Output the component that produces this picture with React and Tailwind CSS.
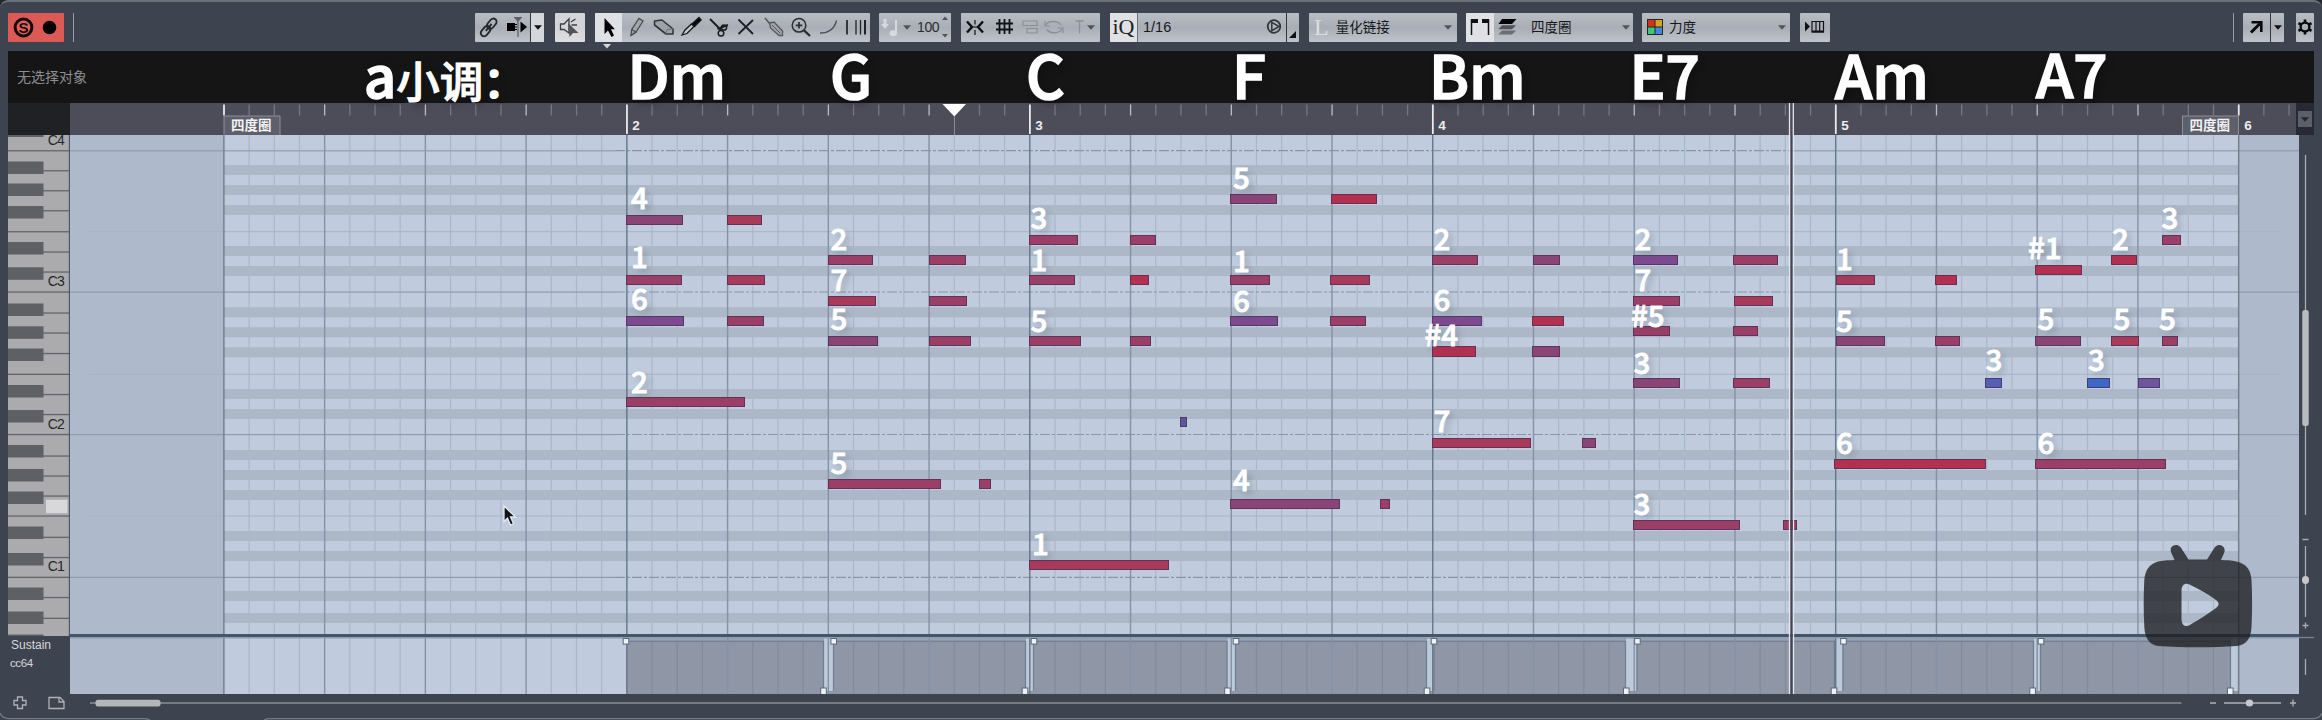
import React from "react";

const BAR = 402.95;
const START = 223.9;
const END = 2238.6;
const X0 = 70;
const Y0 = 135;

const COLORS = {
  r: "#b43050",
  c: "#a83a5a",
  m: "#9c3f66",
  p: "#8a4576",
  v: "#7c4a8e",
  i: "#5c55a0",
  u: "#6c579e",
  s: "#5560b4",
  b: "#3d69c6",
};

// [x start, x end, y top, height, colour]
const NOTES = [
  [626, 683, 215, 10, "p"], [727, 762, 215, 10, "c"],
  [626, 682, 275, 10, "m"], [727, 765, 275, 10, "c"],
  [626, 684, 316, 10, "v"], [727, 764, 316, 10, "m"],
  [626, 745, 397, 10, "m"],
  [828, 873, 255, 10, "m"], [929, 966, 255, 10, "m"],
  [828, 876, 296, 10, "c"], [929, 967, 296, 10, "m"],
  [828, 878, 336, 10, "p"], [929, 971, 336, 10, "m"],
  [828, 941, 479, 10, "m"], [979, 991, 479, 10, "m"],
  [1029, 1078, 235, 10, "m"], [1130, 1156, 235, 10, "m"],
  [1029, 1075, 275, 10, "m"], [1130, 1149, 275, 10, "r"],
  [1029, 1081, 336, 10, "m"], [1130, 1151, 336, 10, "m"],
  [1180, 1187, 417, 10, "i"],
  [1029, 1169, 560, 10, "c"],
  [1230, 1277, 194, 10, "p"], [1331, 1377, 194, 10, "r"],
  [1230, 1270, 275, 10, "m"], [1330, 1370, 275, 10, "c"],
  [1230, 1278, 316, 10, "v"], [1330, 1366, 316, 10, "m"],
  [1230, 1340, 499, 10, "p"], [1380, 1390, 499, 10, "m"],
  [1432, 1478, 255, 10, "m"], [1533, 1560, 255, 10, "p"],
  [1432, 1482, 316, 10, "v"], [1532, 1564, 316, 10, "r"],
  [1432, 1476, 346, 11, "r"], [1532, 1560, 346, 11, "p"],
  [1432, 1531, 438, 10, "c"], [1582, 1596, 438, 10, "p"],
  [1633, 1678, 255, 10, "v"], [1733, 1778, 255, 10, "m"],
  [1633, 1680, 296, 10, "m"], [1734, 1773, 296, 10, "c"],
  [1633, 1670, 326, 10, "m"], [1733, 1758, 326, 10, "m"],
  [1633, 1680, 378, 10, "p"], [1733, 1770, 378, 10, "m"],
  [1633, 1740, 520, 10, "m"], [1783, 1797, 520, 10, "m"],
  [1836, 1875, 275, 10, "c"], [1935, 1957, 275, 10, "r"],
  [1836, 1885, 336, 10, "p"], [1935, 1960, 336, 10, "m"],
  [1985, 2002, 378, 10, "s"],
  [1834, 1986, 459, 10, "r"],
  [2035, 2082, 265, 10, "r"], [2111, 2137, 255, 10, "r"], [2162, 2181, 235, 10, "m"],
  [2035, 2081, 336, 10, "p"], [2111, 2139, 336, 10, "c"], [2162, 2178, 336, 10, "m"],
  [2087, 2110, 378, 10, "b"], [2138, 2160, 378, 10, "u"],
  [2035, 2166, 459, 10, "m"],
];

// [text, x, baseline]
const LABELS = [
  ["4", 631, 209], ["1", 631, 267.5], ["6", 631, 310], ["2", 631, 392.5],
  ["2", 830.5, 250], ["7", 830.5, 291], ["5", 830.5, 329.5], ["5", 830.5, 474],
  ["3", 1030.5, 228.5], ["1", 1030.5, 271], ["5", 1030.5, 332], ["1", 1032, 555],
  ["5", 1233, 188.5], ["1", 1233, 271.5], ["6", 1233, 312], ["4", 1233, 491],
  ["2", 1433.5, 250], ["6", 1433.5, 311], ["#4", 1424.5, 346], ["7", 1433.5, 432],
  ["2", 1634.5, 250], ["7", 1634.5, 291], ["#5", 1631, 327], ["3", 1633.5, 374], ["3", 1633.5, 515],
  ["1", 1836, 270], ["5", 1836, 332], ["3", 1985.5, 370.5], ["6", 1836, 454],
  ["#1", 2028, 259], ["2", 2112, 250], ["3", 2161.5, 228.5],
  ["5", 2037.5, 330], ["5", 2113.5, 330], ["5", 2159, 330],
  ["3", 2088, 370.5], ["6", 2037.5, 454],
];

const CHORDS = [
  ["Dm", 627.5, 99], ["G", 830, 99], ["C", 1026, 99], ["F", 1232, 99],
  ["Bm", 1429, 99], ["E7", 1629.5, 99], ["Am", 1835, 99], ["A7", 2036, 97.5],
];

const SHARP_ROWS = [165, 185, 205, 246, 266, 307.3, 327.3, 347.3, 389, 409, 450, 470, 490, 531, 551, 591, 613];
const C_LINES = [150.7, 292, 434.5, 577.3];
const F_LINES = [231.7, 374.3, 516];

const SUSTAIN_GAPS = [
  [824, 833], [1026, 1033], [1227.5, 1235], [1427, 1433.5],
  [1626, 1636.5], [1835, 1842.5], [2034, 2040], [2231, 2238],
];
const TOP_HANDLES = [626, 833.7, 1034, 1236, 1434, 1637.4, 1843.5, 2041];
const LOW_HANDLES = [823.5, 1025, 1227.5, 1427, 1626.3, 1834, 2032.6, 2230.3];

const steps = Array.from({ length: 81 }, (_, k) => ({ k, x: START + (k * BAR) / 16 }));

function Box({ className = "", children }) {
  return (
    <div className={`flex h-[29px] shrink-0 items-center overflow-hidden rounded-[1px] bg-linear-to-b from-[#b9bdc4] via-[#a9aeb6] via-50% to-[#bfc3c9] text-[#15171a] ${className}`}>
      {children}
    </div>
  );
}

function Icon({ w = 24, className = "", children }) {
  return (
    <svg
      className={`shrink-0 ${className}`}
      width={w}
      height="24"
      viewBox={`0 0 ${w} 24`}
      fill="none"
      stroke="currentColor"
      strokeWidth="1.5"
    >
      {children}
    </svg>
  );
}

function Down({ className = "text-[#50545b]" }) {
  return (
    <svg className={`shrink-0 ${className}`} width="8" height="5" viewBox="0 0 8 5">
      <path d="M0 0.3H8L4 4.7Z" fill="currentColor" />
    </svg>
  );
}

const cjk = "font-['Noto_Sans_CJK_SC','Noto_Sans',sans-serif]";

function Toolbar() {
  return (
    <div className="flex h-[51px] shrink-0 items-start pt-[12.5px] pl-2">
      <div className="flex h-[29px] w-14 items-center rounded-[1px] bg-[#dc5a55]">
        <svg width="56" height="29" viewBox="0 0 56 29">
          <circle cx="15.5" cy="14.5" r="8.4" fill="#e0605a" stroke="#140a0c" strokeWidth="3" />
          <text x="15.5" y="20" textAnchor="middle" fontSize="15" fontWeight="700" fontFamily="Liberation Sans, sans-serif" fill="#140a0c">S</text>
          <circle cx="41.5" cy="14.5" r="6.8" fill="#060303" />
        </svg>
      </div>
      <div className="ml-[9px] h-[29px] w-px bg-[#9a9ea5]" />

      <Box className="ml-[401px] w-[69px]">
        <Icon w={28} className="text-[#25282d]">
          <g transform="rotate(-50 14 12)" strokeWidth="1.9">
            <rect x="3" y="8.7" width="11.5" height="6.6" rx="3.3" />
            <rect x="12.5" y="8.7" width="11.5" height="6.6" rx="3.3" />
            <path d="M9 12H18" />
          </g>
        </Icon>
        <Icon w={27} className="text-black">
          <path d="M4 8H12V16H4Z" fill="currentColor" stroke="none" />
          <path d="M17.5 6.5L24 12L17.5 17.5Z" fill="currentColor" stroke="none" />
          <path d="M12 9.5H14M12 12H14M12 14.5H14" strokeWidth="1" />
          <path d="M15 4V22" stroke="#6a6d73" />
          <path d="M10.5 2H19.5L15 7Z" fill="#5c5f65" stroke="none" />
        </Icon>
        <div className="flex h-full w-[14px] items-center justify-center border-l border-[#33363c] bg-[#d5d7db]">
          <Down className="text-[#111]" />
        </div>
      </Box>

      <Box className="ml-[11px] w-[30px] justify-center from-[#d3d5d8] via-[#d3d5d8] to-[#dcdee0]">
        <Icon w={26} className="text-[#3a3d42]">
          <path d="M3.5 9H7L12 3.8V18L7 14.5H3.5Z" strokeWidth="1.3" />
          <path d="M14.5 10H20M14 7L18.5 4" strokeWidth="1.3" />
          <path d="M11 8L21.5 18H16L12.5 22Z" fill="#505358" stroke="none" />
        </Icon>
      </Box>

      <div className="ml-2.5 flex flex-col">
        <Box className="w-[275px]">
          <div className="flex h-full w-[27px] shrink-0 items-center justify-center bg-[#dfe1e4]">
            <Icon w={24} className="text-black">
              <path d="M7.5 3V19L11 15.5L14.5 22L17 20.5L14 14.3H18Z" fill="currentColor" stroke="none" />
            </Icon>
          </div>
          <Icon w={27.5} className="text-[#4a4d52]">
            <path d="M9 20.5L9.7 14.5L17 3.5L21 6L14 17Z" fill="#a3a6ab" strokeWidth="1.3" />
            <path d="M9.7 14.5L14 17L9 20.5" strokeWidth="1.2" />
          </Icon>
          <Icon w={27.5} className="text-[#33363b]">
            <path d="M4.5 6L12 5L23 14V19H16L4.5 10Z" fill="#9ea2a8" strokeWidth="1.6" strokeLinejoin="round" />
            <path d="M16 19L17 14.5L23 14" stroke="#6f7379" strokeWidth="1" />
          </Icon>
          <Icon w={27.5} className="text-[#15171a]">
            <path d="M15 9L22 2.5L24 5L17.5 11.5Z" fill="#000" strokeWidth="1.5" />
            <path d="M5 20L8 15L14.5 9L17 11.5L10 18.5Z" fill="#c2c5ca" strokeWidth="1.3" />
          </Icon>
          <Icon w={27.5} className="text-[#1b1d21]">
            <path d="M5 4L16 15M23 10L12.5 14" strokeWidth="1.9" />
            <circle cx="19" cy="12.5" r="2.6" />
            <circle cx="16" cy="18.3" r="2.8" />
          </Icon>
          <Icon w={27.5} className="text-[#1e2024]">
            <path d="M6.5 4.5L21 19M21 5L6.5 19" strokeWidth="1.8" />
          </Icon>
          <Icon w={27.5} className="text-[#55585e]">
            <path d="M5 3L10 9" strokeWidth="1.5" />
            <path d="M9.5 8L14 7L22.5 16V20.5H19L10.5 13Z" fill="#9fa3a9" strokeWidth="1.3" />
            <path d="M12 10L20 18" strokeWidth="1" />
          </Icon>
          <Icon w={27.5} className="text-[#2a2d32]">
            <circle cx="12" cy="10.3" r="6.8" />
            <path d="M12 7V13.6M8.7 10.3H15.3" strokeWidth="1.7" />
            <path d="M17 15.3L23 21" strokeWidth="2.4" />
          </Icon>
          <Icon w={27.5} className="text-[#4f5258]">
            <path d="M5 18C13 18.5 19.5 14 21.5 5.5" strokeWidth="1.4" />
          </Icon>
          <Icon w={27.5} className="text-[#202227]">
            <path d="M5 5V19.5" strokeWidth="1.7" />
            <path d="M14 5V19.5M18.5 5V19.5" strokeWidth="1.3" />
            <path d="M23 5V19.5" strokeWidth="2" />
          </Icon>
        </Box>
        <svg className="mt-[2.5px] ml-2" width="8" height="5" viewBox="0 0 8 5">
          <path d="M0 0H8L4 4.5Z" fill="#d5d8dc" />
        </svg>
      </div>

      <Box className="ml-[9px] w-[72px]">
        <Icon w={21} className="text-[#d6d9dd]">
          <path d="M6 4V9" strokeWidth="3" />
          <path d="M2 9H10L6 14Z" fill="currentColor" stroke="none" />
          <path d="M17 5V18" strokeWidth="2" />
          <ellipse cx="14.3" cy="18.3" rx="3.7" ry="3" fill="currentColor" stroke="none" />
        </Icon>
        <div className="ml-[3px] flex"><Down /></div>
        <span className="ml-[6px] font-['Liberation_Sans',sans-serif] text-[14px] leading-none tracking-[-0.4px] text-[#2b2e33]">100</span>
        <svg className="ml-[2px] shrink-0" width="8" height="24" viewBox="0 0 8 24">
          <path d="M1 5L4 1.5L7 5ZM1 19H7L4 22.5Z" fill="#50545b" />
        </svg>
      </Box>

      <Box className="ml-[10px] w-[139px]">
        <Icon w={29} className="text-[#0d0f12]">
          <path d="M6 6.5L11 12L6 17.5M22 6.5L17 12L22 17.5" strokeWidth="2.4" />
          <path d="M14 5V9.5M14 15V20" strokeWidth="1.2" />
          <path d="M12 12H16" strokeWidth="1.2" />
        </Icon>
        <Icon w={29} className="text-[#101216]">
          <path d="M9.5 4V19M14.5 4V19M19.5 4V19M6 8.5H23M6 14.5H23" strokeWidth="1.8" />
        </Icon>
        <Icon w={20} className="ml-px text-[#8b9097]">
          <path d="M3 6H17V10.5H3ZM7 13.5H17V18H7Z" strokeWidth="1.2" />
        </Icon>
        <Icon w={27} className="text-[#8b9097]">
          <path d="M6 10C8 5.5 18 5 21 10M22 14C19 19 10 19 7 14.5" strokeWidth="1.4" />
          <path d="M5 6V11H10M23 18V13H18" strokeWidth="1.2" />
        </Icon>
        <Icon w={20} className="text-[#8b9097]">
          <path d="M8.5 6H16.5M12.5 6V18.5" strokeWidth="1.3" />
        </Icon>
        <Down />
      </Box>

      <Box className="ml-[10px] w-[189px]">
        <div className="flex h-full w-7 items-center justify-center border-r border-[#6d7178] bg-[#dfe1e4] font-['Liberation_Serif',serif] text-[22px] leading-none text-[#222]">iQ</div>
        <span className="ml-[5px] font-['Liberation_Sans',sans-serif] text-[14.5px] leading-none text-[#15171a]">1/16</span>
        <Icon w={20} className="ml-auto text-[#33363b]">
          <circle cx="10" cy="11.5" r="6.3" strokeWidth="1.8" />
          <path d="M7.8 7.3L15 11.5L7.8 15.7Z" fill="#b4b8be" strokeWidth="1.5" />
        </Icon>
        <div className="ml-[2px] flex h-full w-[13px] items-end justify-end border-l border-[#33363c] pr-[3px] pb-1">
          <svg width="7" height="7" viewBox="0 0 7 7"><path d="M7 0V7H0Z" fill="#111" /></svg>
        </div>
      </Box>

      <Box className="ml-[10px] w-[148px] pr-[5px]">
        <span className="ml-[5px] font-['Liberation_Serif',serif] text-[24px] leading-none text-[#dadde1]">L</span>
        <span className={`ml-[7px] text-[13.5px] leading-none text-[#15171a] ${cjk}`}>量化链接</span>
        <div className="ml-auto flex"><Down /></div>
      </Box>

      <Box className="ml-[9px] w-[167px] pr-[3px]">
        <div className="flex h-full w-7 shrink-0 items-center justify-center bg-[#dfe1e4]">
          <Icon w={22} className="text-[#111]">
            <path d="M2.5 4V20M19.5 4V20" strokeWidth="1.5" />
            <path d="M2 4H9V8H2ZM13 4H20V8H13Z" fill="currentColor" stroke="none" />
          </Icon>
        </div>
        <Icon w={26}>
          <path d="M8 4H22.5L18 9H4.5Z" fill="#050505" stroke="none" />
          <path d="M8 10.3H22L18 14.3H4.5Z" fill="#4f5359" stroke="none" />
          <path d="M8 15.5H22L18 19.5H4.5Z" fill="#6b6f75" stroke="none" />
        </Icon>
        <span className={`ml-[11px] text-[13.5px] leading-none text-[#15171a] ${cjk}`}>四度圈</span>
        <div className="ml-auto flex"><Down /></div>
      </Box>

      <Box className="ml-[9px] w-[148px] pr-1">
        <svg className="ml-[5px] shrink-0" width="16" height="16" viewBox="0 0 16 16">
          <rect width="16" height="16" fill="#2a2620" />
          <rect x="1" y="1" width="6.5" height="6.5" fill="#d8301c" />
          <rect x="8.5" y="1" width="6.5" height="6.5" fill="#d8a028" />
          <rect x="1" y="8.5" width="6.5" height="6.5" fill="#3cc870" />
          <rect x="8.5" y="8.5" width="6.5" height="6.5" fill="#3c88dc" />
        </svg>
        <span className={`ml-[6px] text-[13.5px] leading-none text-[#15171a] ${cjk}`}>力度</span>
        <div className="ml-auto flex"><Down /></div>
      </Box>

      <Box className="ml-[10px] w-[30px] justify-center">
        <Icon w={26} className="text-[#101215]">
          <path d="M3 6.5L8 11.5L3 16.5Z" fill="currentColor" stroke="none" />
          <path d="M10 6.5H21.5V17H10ZM14 6.5V17M17.7 6.5V17" strokeWidth="1.2" />
          <path d="M10 16.5H22" strokeWidth="2" />
        </Icon>
      </Box>

      <div className="ml-[403px] h-[29px] w-px bg-[#9a9ea5]" />
      <Box className="ml-[9px] w-[41px]">
        <Icon w={27} className="text-[#08090b]">
          <path d="M8 17.5L17 8.5" strokeWidth="3" />
          <path d="M8.5 7.3H18.3V17" strokeWidth="2.6" />
        </Icon>
        <div className="flex h-full w-[14px] items-center justify-center border-l border-[#33363c]">
          <Down className="text-[#111]" />
        </div>
      </Box>
      <Box className="ml-[12px] w-[18px] justify-center">
        <Icon w={18} className="text-[#08090b]">
          <circle cx="9" cy="12" r="4.4" strokeWidth="2.4" />
          <path d="M9 4.5V7.5M9 16.5V19.5M2.5 8.2L5 9.7M13 14.3L15.5 15.8M2.5 15.8L5 14.3M13 9.7L15.5 8.2" strokeWidth="2.6" />
        </Icon>
      </Box>
    </div>
  );
}

function InfoLine() {
  return (
    <div className="relative mx-2 flex h-[52px] shrink-0 items-center bg-[#151516] pb-[2px] pl-[9px]">
      <span className={`text-[14px] leading-none text-[#8d8e92] ${cjk}`}>无选择对象</span>
    </div>
  );
}

function Ruler() {
  return (
    <div className="flex h-8 shrink-0 px-2">
      <div className="w-[62px] bg-[#202124]" />
      <svg width="2226" height="32" viewBox="70 103 2226 32">
        <rect x="70" y="103" width="2226" height="32" fill="#4d4c59" />
        {Array.from({ length: 83 }, (_, k) => {
          const x = START + (k * BAR) / 16;
          const bar = k % 16 === 0;
          return (
            <rect
              key={k}
              x={x - (bar ? 0.8 : 0.6)}
              y="104.5"
              width={bar ? 1.8 : 1.3}
              height={bar && k > 0 && k < 80 ? 29.5 : 11}
              fill={bar ? "#e9e9ee" : k % 4 === 0 ? "#bcbcc6" : "#777683"}
            />
          );
        })}
        {[2, 3, 4, 5, 6].map((n) => (
          <text key={n} x={START + (n - 1) * BAR + 5.5} y="129.5" fontSize="13.5" fontWeight="700" fontFamily="Liberation Sans, sans-serif" fill="#ececf0">{n}</text>
        ))}
        {[[224, 56, 231], [2182.5, 56, 2189.5]].map(([x, w, tx]) => (
          <g key={x}>
            <rect x={x} y="116" width={w} height="19" fill="#5d5f6b" />
            <path d={`M${x} 135V116H${x + w}V135`} fill="none" stroke="#8d8f99" />
            <text x={tx} y="130.3" fontSize="13.5" fontWeight="700" fontFamily="Noto Sans CJK SC, sans-serif" fill="#f2f2f4">四度圈</text>
          </g>
        ))}
        <path d="M942.5 104H966L954.3 116.5Z" fill="#fff" />
        <path d="M954.5 116V135" stroke="#8a8994" />
        <path d="M1789.5 103V135M1793.3 103V135" stroke="#e4e4ea" strokeWidth="1.3" />
      </svg>
      <div className="flex w-[18px] items-center justify-center bg-[#272a35]">
        <div className="flex h-4 w-[14px] items-center justify-center bg-[#5c5f69]">
          <Down className="text-[#23262f]" />
        </div>
      </div>
    </div>
  );
}

function Keyboard() {
  const blackKeys = [161.5, 183.5, 206, 242, 267.3, 303.5, 326.3, 348.5, 385, 410, 445, 469, 491.5, 526.5, 553, 587.5, 611.5];
  const splits = [170.7, 190.7, 210.7, 252, 272, 313, 333, 353.5, 394.5, 414.5, 456, 476, 496, 537.3, 557.5, 597.5, 618.3];
  return (
    <svg className="shrink-0" width="62" height="501" viewBox="8 135 62 501">
      <rect x="8" y="135" width="62" height="501" fill="#ababae" />
      <rect x="8" y="135" width="35.5" height="2" fill="#5f6063" />
      {splits.map((y) => (
        <rect key={y} x="43" y={y - 0.6} width="26" height="1.3" fill="#64656b" />
      ))}
      {C_LINES.concat(F_LINES).map((y) => (
        <rect key={y} x="8" y={y - 0.6} width="61" height="1.3" fill="#64656b" />
      ))}
      {blackKeys.map((y) => (
        <rect key={y} x="8" y={y} width="35.5" height="12.5" fill="#5f6063" />
      ))}
      <rect x="8" y="634.5" width="35.5" height="2" fill="#5f6063" />
      <rect x="46" y="499.7" width="21.5" height="13.5" fill="#d8d8da" />
      {[["C4", 144.7], ["C3", 286], ["C2", 428.5], ["C1", 571]].map(([t, y]) => (
        <text key={t} x="47.8" y={y} fontSize="14" textLength="17" fontFamily="Liberation Sans, sans-serif" fill="#25262a">{t}</text>
      ))}
      <rect x="68.8" y="135" width="1.2" height="501" fill="#4f566e" />
    </svg>
  );
}

function Grid() {
  return (
    <svg className="block" width="2229" height="559" viewBox="70 135 2229 559">
      <rect x="70" y="135" width="2229" height="559" fill="#aeb9cc" />
      <rect x={START} y="135" width={END - START} height="559" fill="#c0ccdd" />
      {steps.map(({ k, x }) => k % 4 !== 0 && (
        <rect key={k} x={x - 0.6} y="135" width="1.2" height="559" fill="#a9b7ca" />
      ))}
      {SHARP_ROWS.map((y) => (
        <rect key={y} x={START} y={y} width={END - START} height="10" fill="#acb8c7" />
      ))}
      {F_LINES.map((y) => (
        <rect key={y} x="90" y={y - 0.5} width="2190" height="1" fill="#a7b3c5" />
      ))}
      {C_LINES.map((y) => (
        <g key={y}>
          <rect x="70" y={y - 0.5} width="545" height="1.2" fill="#8f9bb0" />
          <path d={`M615 ${y}H1790`} stroke="#8996aa" strokeWidth="1.2" strokeDasharray="10 2 3 2" />
          <rect x="1790" y={y - 0.5} width="509" height="1.2" fill="#8f9bb0" />
        </g>
      ))}

      <rect x="626.5" y="638" width={END - 626.5} height="56" fill="#8f97a6" />
      <rect x="626.5" y="638" width={END - 626.5} height="3" fill="#95a3b4" />
      <rect x="626.5" y="640.7" width={END - 626.5} height="1.2" fill="#6f7e90" />
      {steps.map(({ k, x }) => k > 16 && k % 4 !== 0 && (
        <rect key={k} x={x - 0.6} y="642" width="1.2" height="52" fill="#808b9b" />
      ))}
      {SUSTAIN_GAPS.map(([a, b]) => (
        <g key={a}>
          <rect x={a} y="638" width={b - a} height="53" fill="#bccad9" />
          <path d={`M${a - 0.5} 641V691M${b + 0.5} 641V691`} stroke="#6e7e90" strokeWidth="1.2" />
        </g>
      ))}
      {steps.map(({ k, x }) => k % 4 === 0 && (
        <rect
          key={k}
          x={x - 0.7}
          y="135"
          width="1.4"
          height="559"
          fill={k === 0 || k === 80 ? "#737b87" : k % 16 === 0 ? "#65758a" : "#8592a6"}
        />
      ))}

      <rect x="70" y="634" width="2229" height="3.2" fill="#45566a" />
      <rect x="70" y="637.2" width="2229" height="1.3" fill="#8d9cad" />
      {TOP_HANDLES.map((x) => (
        <rect key={x} x={x - 2.8} y="638.5" width="5.6" height="5.6" fill="#eef1f5" stroke="#5b6878" />
      ))}
      {LOW_HANDLES.map((x) => (
        <rect key={x} x={x - 2.8} y="688" width="5.6" height="6.5" fill="#eef1f5" stroke="#5b6878" />
      ))}
    </svg>
  );
}

function PianoRoll() {
  return (
    <div className="relative h-[559px] w-[2229px] shrink-0">
      <Grid />
      {NOTES.map(([a, b, y, h, c]) => (
        <div
          key={`${a}-${y}`}
          className="absolute border border-[#4b2f58]/75"
          style={{ left: a - X0, top: y - Y0, width: b - a, height: h, backgroundColor: COLORS[c] }}
        />
      ))}
      {LABELS.map(([t, x, y]) => (
        <span
          key={`${t}-${x}-${y}`}
          className={`absolute h-6 text-[29.5px] leading-6 font-medium whitespace-nowrap text-white [-webkit-text-stroke:0.8px_white] [text-shadow:4px_4px_6px_rgba(70,85,110,0.35)] ${cjk}`}
          style={{ left: x - X0, top: y - Y0 - 25 }}
        >
          {t}
        </span>
      ))}
      <svg className="absolute top-0 left-[1717px]" width="10" height="559" viewBox="0 0 10 559">
        <path d="M2.5 0V559M6.5 0V559" stroke="#dfe6ee" strokeWidth="1.3" />
        <path d="M4.5 0V559" stroke="#4b4454" strokeWidth="2.2" />
      </svg>
      <svg className="absolute top-[369px] left-[432px]" width="18" height="26" viewBox="0 0 18 26">
        <path d="M2 2V17.5L5.5 14.2L8.5 21L11.5 19.7L8.5 13H13.5Z" fill="#111317" stroke="#e6eaf0" strokeWidth="1.3" />
      </svg>
      <svg className="absolute top-[407px] left-[2070px]" width="116" height="110" viewBox="2140 542 116 110">
        <path
          fillRule="evenodd"
          fill="#1c1d20"
          fillOpacity="0.78"
          d="M2158 561.5C2165 560.3 2170 560.2 2174.5 560L2171 552C2169 546 2176 542.5 2180.5 547L2188.5 559.6H2207L2215 547C2219 542.5 2226 546 2224.5 552L2221 560C2226 560.2 2231 560.3 2237 561.5C2247 564 2251 571 2251.5 580C2252.3 595 2252.3 612 2251.5 627C2251 638 2247 644.5 2237 646C2212 647.8 2183 647.8 2158 646C2149 644.5 2145 638 2144.3 627C2143.5 612 2143.5 595 2144.3 580C2145 571 2149 564 2158 561.5ZM2181.5 590V620C2182 626 2186 627.5 2190.5 624.5C2200 619.5 2208 613.5 2216 608C2219.5 605 2219.5 603 2216 600C2208 594 2200 589.5 2190.5 585C2186 582.5 2182 584 2181.5 590Z"
        />
      </svg>
    </div>
  );
}

function VerticalScroll() {
  return (
    <svg className="shrink-0" width="15" height="559" viewBox="2299 135 15 559">
      <g stroke="#a9acb3" strokeWidth="1.3" fill="none">
        <path d="M2305.5 155V515M2305.5 546V617M2305.5 659V675" />
        <path d="M2302.5 539.5H2308.5M2302.5 625.5H2308.5M2305.5 622.5V628.5" />
        <path d="M2299 637.5H2314" stroke="#7f858f" />
      </g>
      <rect x="2302.3" y="310" width="6.4" height="116" rx="2.5" fill="#b9bbc0" />
      <ellipse cx="2305.5" cy="580" rx="3.5" ry="4" fill="#c6c8cc" />
    </svg>
  );
}

function Footer() {
  return (
    <svg className="shrink-0" width="2322" height="26" viewBox="0 694 2322 26">
      <g fill="none" stroke="#aeb1b6" strokeWidth="1.3">
        <path d="M17.5 697V700.5H14V705H17.5V708.5H22.5V705H26V700.5H22.5V697Z" />
        <path d="M49 697.5H60L64 701.5V708.5H49ZM59 697.5V702H64" />
        <path d="M90 703H2181.5" stroke="#8b8e93" strokeWidth="1.6" />
        <path d="M2210 703H2216M2224 703H2281M2290 703H2296M2293 699.5V706.5" />
        <path d="M0 713Q2 718.7 10 718.7H146L150 720M264 720L268 718.7H2312Q2320 718.7 2322 713" stroke="#777b83" />
      </g>
      <rect x="95.5" y="699.7" width="65" height="6.8" rx="2.5" fill="#b5b6ba" />
      <ellipse cx="2249.5" cy="703" rx="3.7" ry="3.5" fill="#c6c8cc" />
    </svg>
  );
}

export default function App() {
  return (
    <div className="h-[720px] w-[2322px] overflow-hidden bg-[#23262c]">
      <div className="relative flex h-[720px] w-[2322px] flex-col overflow-hidden rounded-t-[8px] bg-[#3e444f]">
        <Toolbar />
        <InfoLine />
        <Ruler />
        <div className="flex h-[559px] shrink-0 pl-2">
          <div className="flex w-[62px] shrink-0 flex-col">
            <Keyboard />
            <div className="flex flex-col pl-[2px] font-['Liberation_Sans',sans-serif] text-[#d6d8dc]">
              <span className="mt-[2px] ml-px text-[12px] leading-[14px]">Sustain</span>
              <span className="mt-[4px] text-[11.5px] leading-[14px] tracking-[-0.4px]">cc64</span>
            </div>
          </div>
          <PianoRoll />
          <VerticalScroll />
        </div>
        <Footer />
        <div className="pointer-events-none absolute inset-0 rounded-t-[8px] border-t-2 border-[#6b6f76]" />
        <div className={`absolute top-0 left-0 text-white [-webkit-text-stroke:1.7px_white] [text-shadow:3px_4px_8px_rgba(0,0,0,0.3)] ${cjk}`}>
          <span className="absolute top-[41px] left-[364px] flex items-baseline leading-[66px] font-medium whitespace-nowrap">
            <span className="text-[56px]">a</span>
            <span className="text-[43.5px] [-webkit-text-stroke:1px_white]">小调</span>
            <span className="text-[43.5px]">：</span>
          </span>
          {CHORDS.map(([t, x, y]) => (
            <span
              key={t}
              className="absolute text-[60px] leading-[80px] font-medium whitespace-nowrap"
              style={{ left: x, top: y - 66 }}
            >
              {t}
            </span>
          ))}
        </div>
      </div>
    </div>
  );
}
